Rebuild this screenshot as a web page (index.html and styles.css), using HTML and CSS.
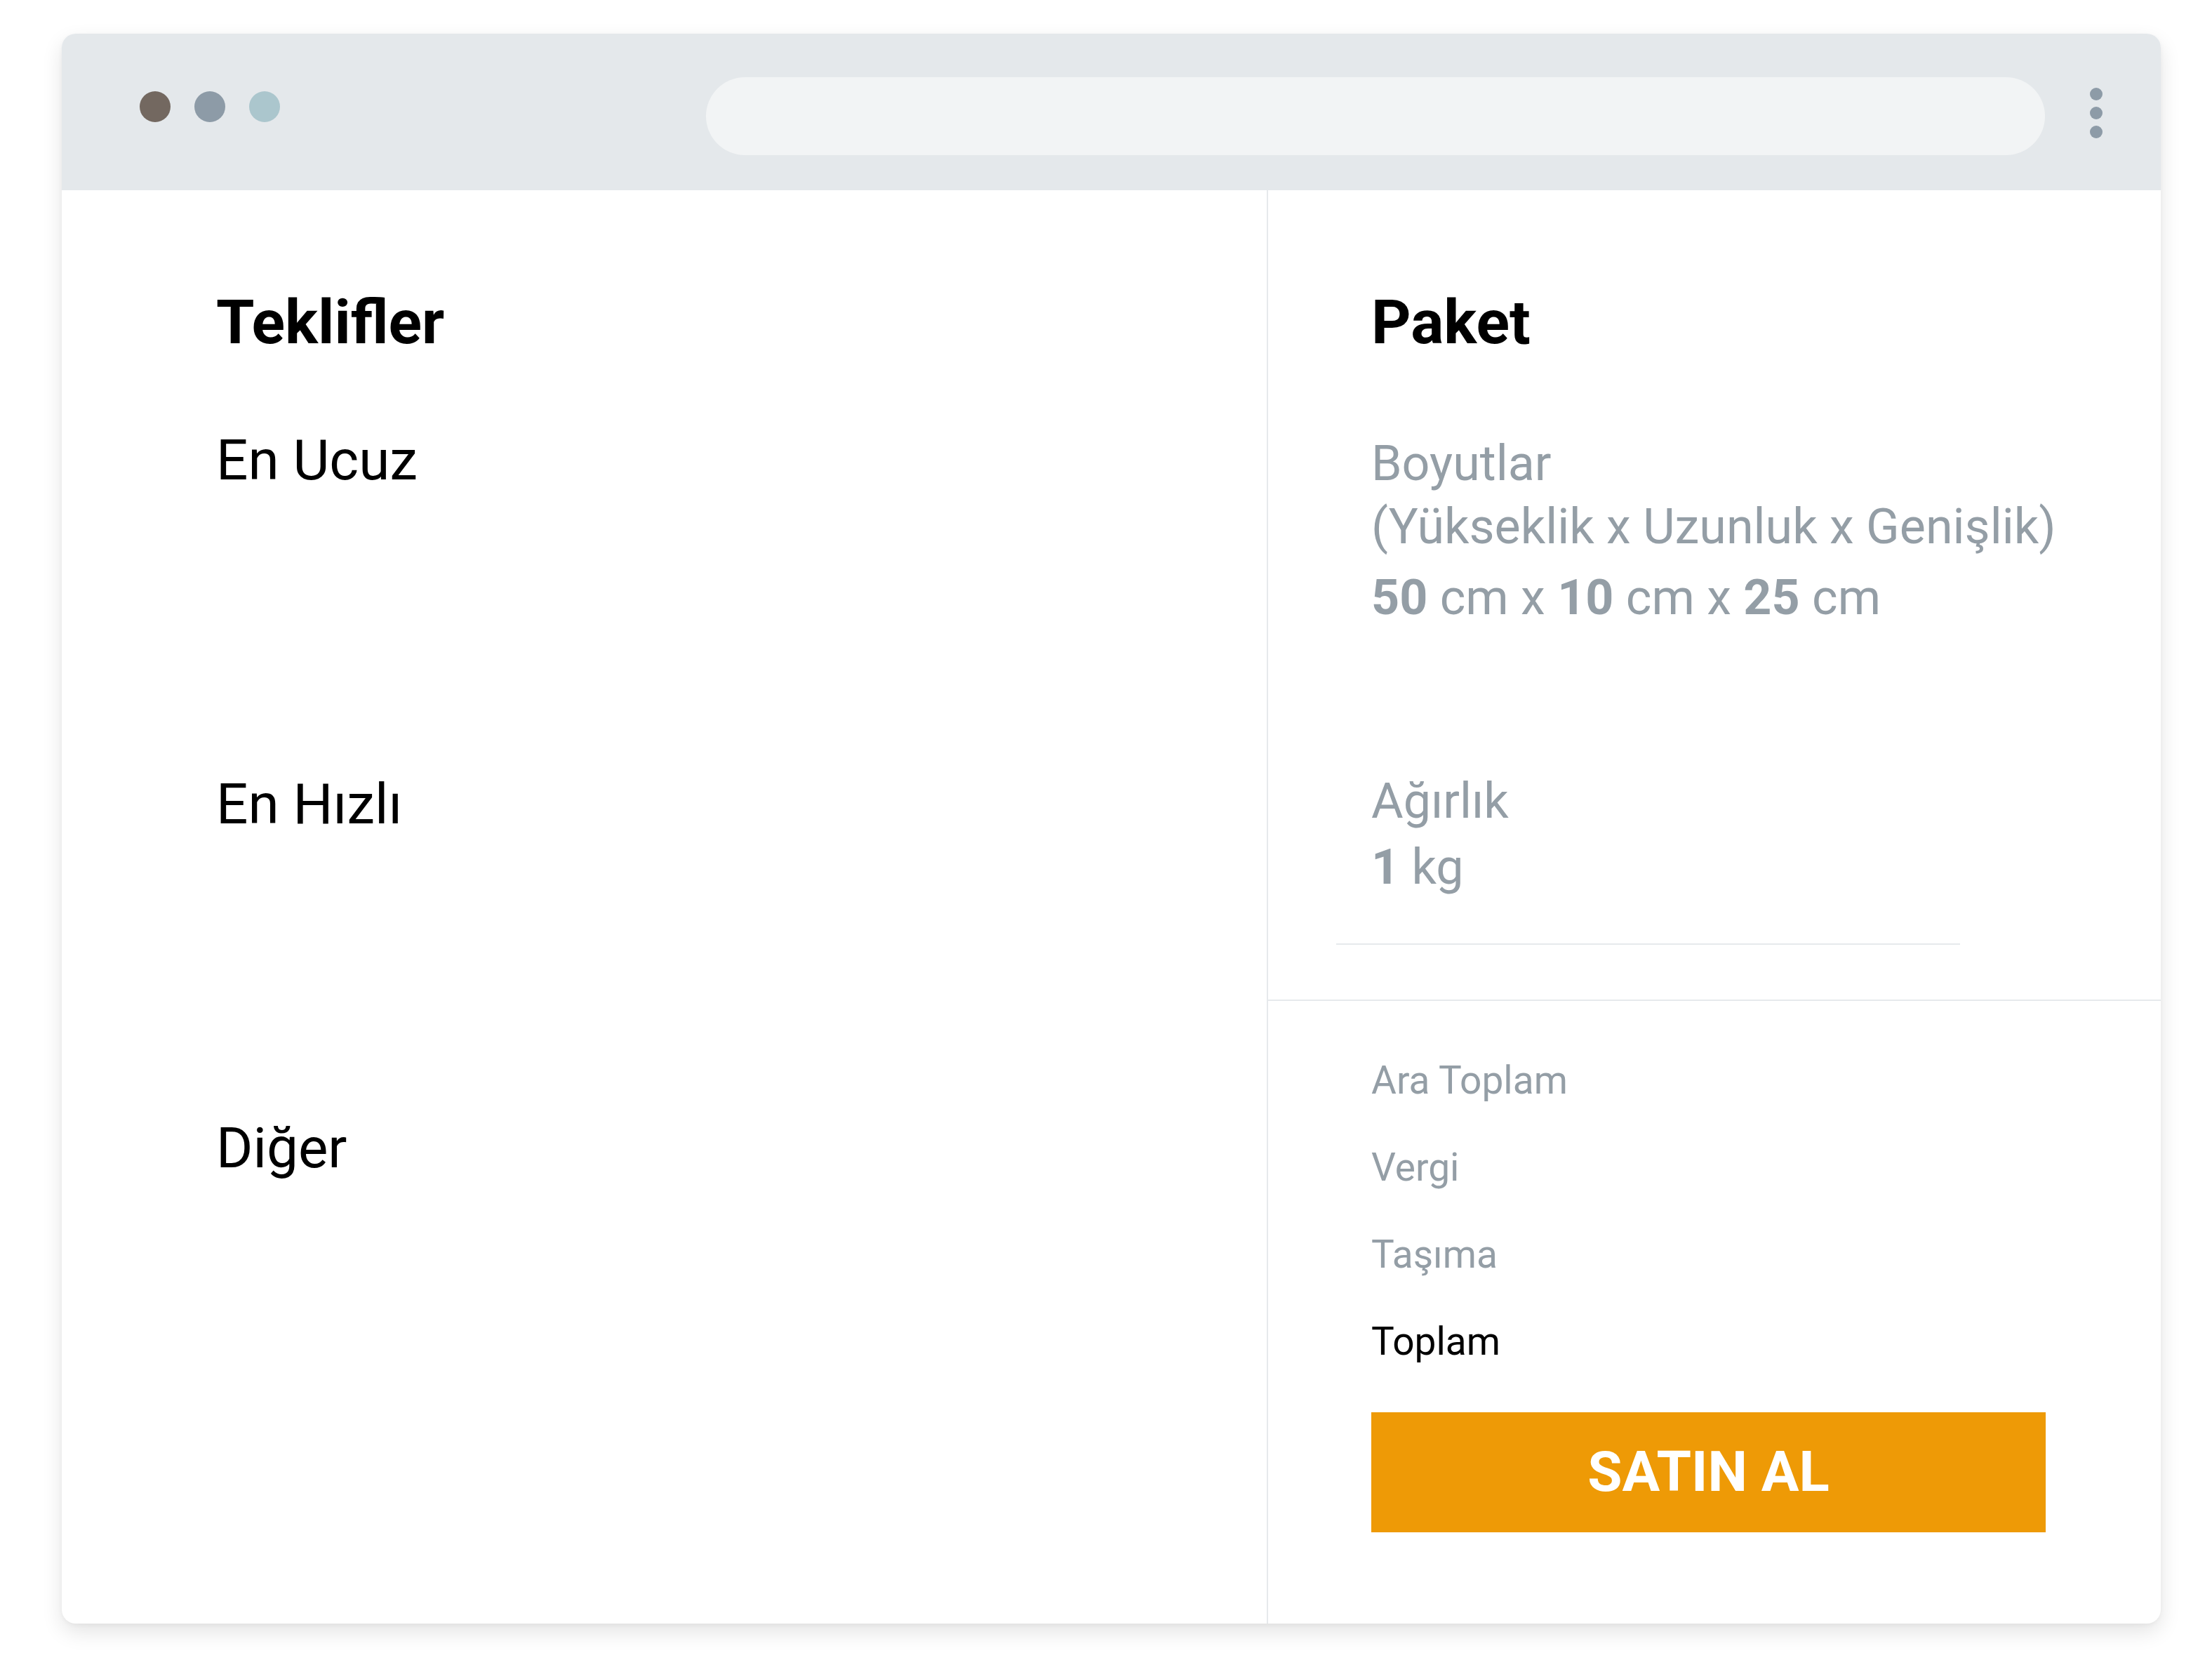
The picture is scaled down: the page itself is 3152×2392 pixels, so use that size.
FILE: index.html
```html
<!DOCTYPE html>
<html lang="tr">
<head>
<meta charset="utf-8">
<title>Teklifler</title>
<link rel="stylesheet" href="styles.css">
</head>
<body>
<div class="window">
  <div class="topbar">
    <div class="lights">
      <span class="light light-1"></span>
      <span class="light light-2"></span>
      <span class="light light-3"></span>
    </div>
    <div class="address"></div>
    <div class="kebab"><span></span><span></span><span></span></div>
  </div>
  <div class="content">
    <section class="offers">
      <h2 class="heading">Teklifler</h2>
      <div class="offer-list">
        <div class="offer">En Ucuz</div>
        <div class="offer">En Hızlı</div>
        <div class="offer">Diğer</div>
      </div>
    </section>
    <section class="panel">
      <div class="package">
        <div class="package-inner">
          <h2 class="heading">Paket</h2>
          <div class="spec dims">
            <div class="spec-line">Boyutlar</div>
            <div class="spec-line">(Yükseklik x Uzunluk x Genişlik)</div>
            <div class="spec-line value value-dims"><b>50</b> cm x <b>10</b> cm x <b>25</b> cm</div>
          </div>
          <div class="spec weight">
            <div class="spec-line">Ağırlık</div>
            <div class="spec-line value value-weight"><b>1</b> kg</div>
          </div>
        </div>
        <div class="rule"></div>
      </div>
      <div class="summary">
        <div class="row">Ara Toplam</div>
        <div class="row">Vergi</div>
        <div class="row">Taşıma</div>
        <div class="row row-total">Toplam</div>
        <button class="buy">SATIN AL</button>
      </div>
    </section>
  </div>
</div>
</body>
</html>
```

FILE: styles.css
```css
html, body {
  margin: 0;
  padding: 0;
  background: #ffffff;
}

body {
  width: 3152px;
  height: 2392px;
  font-family: Roboto, "Liberation Sans", Arial, sans-serif;
  overflow: hidden;
}

.window {
  margin: 48px 0 0 88px;
  width: 2991px;
  height: 2265px;
  border-radius: 20px;
  overflow: hidden;
  background: #ffffff;
  box-shadow: 0 12px 30px rgba(0, 0, 0, 0.11), 0 2px 6px rgba(0, 0, 0, 0.04);
  display: flex;
  flex-direction: column;
}

.topbar {
  flex-shrink: 0;
  height: 223px;
  background: #e4e8eb;
  display: flex;
  align-items: flex-start;
  padding-left: 111px;
}

.lights {
  display: flex;
  gap: 34px;
  margin-top: 82px;
}

.light {
  width: 44px;
  height: 44px;
  border-radius: 50%;
  display: block;
}

.light-1 { background: #736860; }
.light-2 { background: #8d9ba7; }
.light-3 { background: #abc6cd; }

.address {
  margin-left: 607px;
  margin-top: 62px;
  width: 1908px;
  height: 111px;
  border-radius: 56px;
  background: #f2f4f5;
}

.kebab {
  margin-left: 64px;
  margin-top: 77px;
  display: flex;
  flex-direction: column;
  gap: 9px;
}

.kebab span {
  display: block;
  width: 18px;
  height: 18px;
  border-radius: 50%;
  background: #8d9ba7;
}

.content {
  flex: 1;
  display: flex;
}

.offers {
  width: 1719px;
  box-sizing: border-box;
  border-right: 2px solid #e6e9ec;
  padding: 138px 0 0 220px;
}

.heading {
  margin: 0;
  font-size: 88px;
  line-height: 100px;
  font-weight: 700;
  color: #000000;
}

.offer-list {
  margin-top: 97px;
}

.offer {
  height: 490px;
  font-size: 80px;
  line-height: 100px;
  color: #000000;
}

.panel {
  flex: 1;
  display: flex;
  flex-direction: column;
}

.package {
  height: 1155px;
  box-sizing: border-box;
  padding-top: 138px;
  border-bottom: 2px solid #e6e9ec;
}

.package-inner {
  padding-left: 147px;
}

.spec {
  color: #949ea6;
  font-size: 70px;
  line-height: 90px;
}

.dims {
  margin-top: 106px;
}

.weight {
  margin-top: 200px;
}

.value-dims {
  margin-top: 11px;
}

.value-weight {
  margin-top: 4px;
}

.value b {
  font-weight: 700;
}

.rule {
  margin: 64px 286px 0 97px;
  height: 2px;
  background: #e6e9ec;
}

.summary {
  padding: 78px 0 0 147px;
  display: flex;
  flex-direction: column;
  align-items: flex-start;
  gap: 54px;
}

.row {
  font-size: 55px;
  line-height: 70px;
  color: #949ea6;
}

.row-total {
  color: #000000;
}

.buy {
  margin-top: 12px;
  width: 961px;
  height: 171px;
  border: none;
  padding: 0;
  background: #ee9a06;
  color: #ffffff;
  font-family: Roboto, "Liberation Sans", Arial, sans-serif;
  font-size: 80px;
  line-height: 171px;
  font-weight: 700;
  text-align: center;
}
```
